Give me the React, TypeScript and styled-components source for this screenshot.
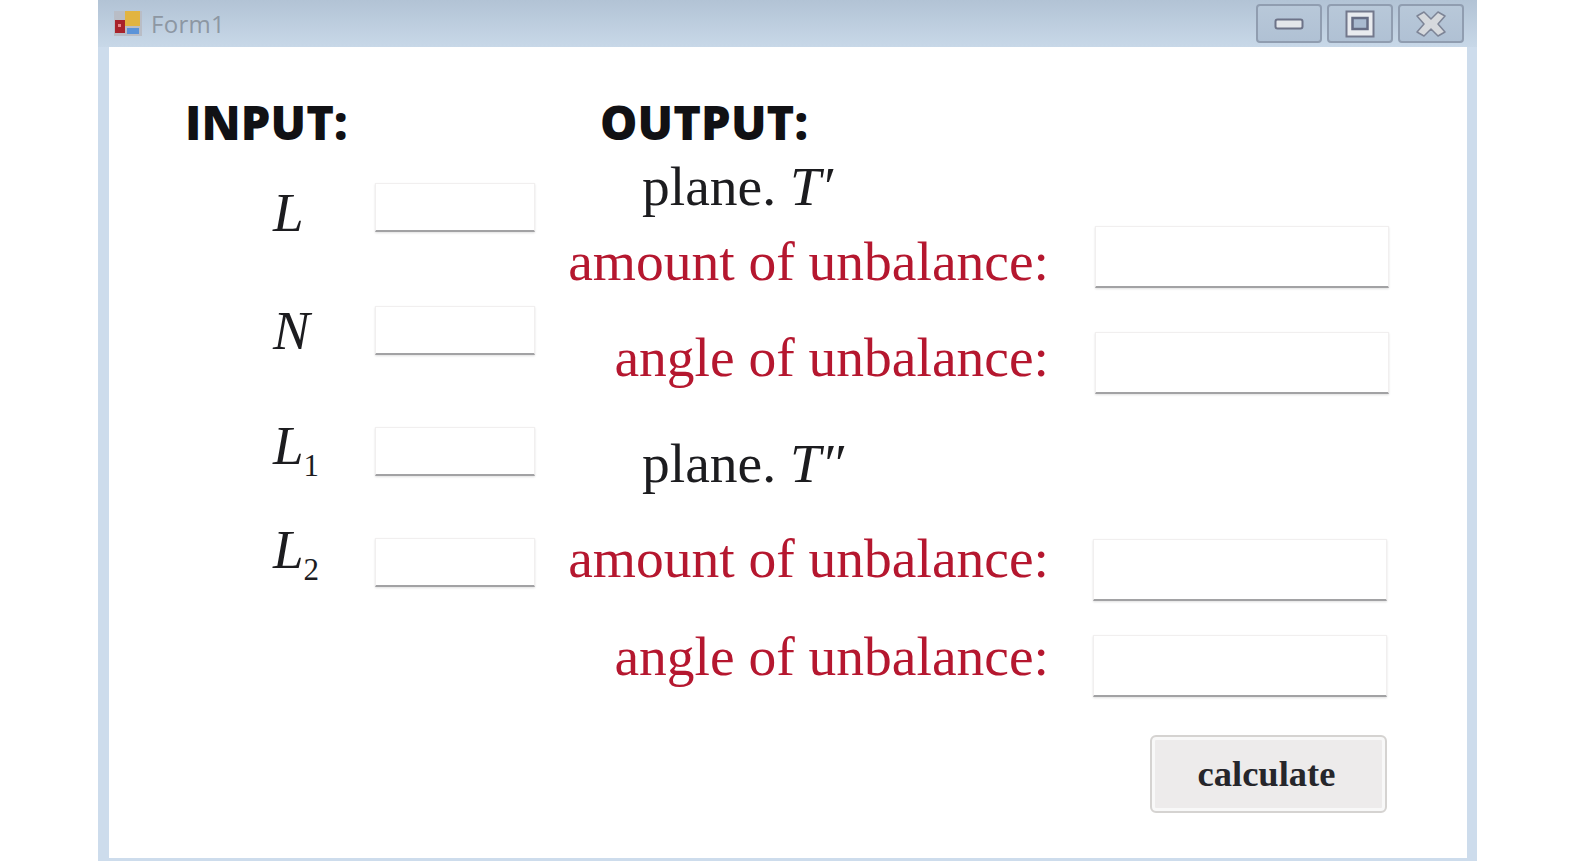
import React from 'react';
import styled, { createGlobalStyle } from 'styled-components';

const GlobalStyle = createGlobalStyle`
  html, body {
    margin: 0;
    padding: 0;
    height: 100%;
    background: #ffffff;
    overflow: hidden;
  }
  #root {
    height: 100%;
  }
`;

const App: React.FC = () => {
  return (
    <>
      <GlobalStyle />
      <Page>
        <FormWindow>
          <TitleBar>
            <TitleLeft>
              <FormIcon />
              <TitleText>Form1</TitleText>
            </TitleLeft>
            <WindowButtons>
              <WindowButton aria-label="minimize">
                <MinimizeGlyph />
              </WindowButton>
              <WindowButton aria-label="maximize">
                <MaximizeGlyph />
              </WindowButton>
              <WindowButton aria-label="close">
                <CloseGlyph />
              </WindowButton>
            </WindowButtons>
          </TitleBar>
          <Client>
            <InputColumn>
              <Heading>INPUT:</Heading>
              <InputRow $top={36}>
                <SymbolLabel $shift={11}>
                  <i>L</i>
                </SymbolLabel>
                <SmallField />
              </InputRow>
              <InputRow $top={74}>
                <SymbolLabel $shift={0}>
                  <i>N</i>
                </SymbolLabel>
                <SmallField />
              </InputRow>
              <InputRow $top={72}>
                <SymbolLabel $shift={-11}>
                  <i>L</i>
                  <sub>1</sub>
                </SymbolLabel>
                <SmallField />
              </InputRow>
              <InputRow $top={62}>
                <SymbolLabel $shift={-25}>
                  <i>L</i>
                  <sub>2</sub>
                </SymbolLabel>
                <SmallField />
              </InputRow>
            </InputColumn>
            <OutputColumn>
              <Heading $indent={40}>OUTPUT:</Heading>
              <PlaneTitle $top={10}>
                plane. <i>T′</i>
              </PlaneTitle>
              <OutputRow $top={9}>
                <OutputLabel $shift={10}>amount of unbalance:</OutputLabel>
                <WideField />
              </OutputRow>
              <OutputRow $top={44}>
                <OutputLabel $shift={-10}>angle of unbalance:</OutputLabel>
                <WideField />
              </OutputRow>
              <PlaneTitle $top={40}>
                plane. <i>T″</i>
              </PlaneTitle>
              <OutputRow $top={45}>
                <OutputLabel $shift={-22}>amount of unbalance:</OutputLabel>
                <WideField $nudge={-2} />
              </OutputRow>
              <OutputRow $top={34}>
                <OutputLabel $shift={-19}>angle of unbalance:</OutputLabel>
                <WideField $nudge={-2} />
              </OutputRow>
              <ButtonRow>
                <CalculateButton>calculate</CalculateButton>
              </ButtonRow>
            </OutputColumn>
          </Client>
        </FormWindow>
      </Page>
    </>
  );
};

const FormIcon = () => (
  <svg width="28" height="26" viewBox="0 0 28 26">
    <rect x="0" y="1" width="28" height="25" fill="#b9bdc6" />
    <rect x="1" y="10" width="10" height="13" fill="#a8232b" />
    <rect x="4" y="14" width="3" height="3" fill="#e8888a" />
    <rect x="11" y="1" width="15" height="15" fill="#e2b440" />
    <rect x="13" y="18" width="12" height="6" fill="#5b93d8" />
  </svg>
);

const MinimizeGlyph = () => (
  <svg width="30" height="12" viewBox="0 0 30 12">
    <rect x="1.5" y="1.5" width="27" height="9" rx="2" fill="#e3e6ea" stroke="#6d7388" strokeWidth="2" />
  </svg>
);

const MaximizeGlyph = () => (
  <svg width="30" height="28" viewBox="0 0 30 28">
    <rect x="1.5" y="1.5" width="27" height="25" fill="#e9ebef" stroke="#73788c" strokeWidth="2" />
    <rect x="7.5" y="8" width="15" height="11" fill="#a9bad0" stroke="#666c84" strokeWidth="2.5" />
  </svg>
);

const CloseGlyph = () => (
  <svg width="30" height="26" viewBox="0 0 30 26">
    <path
      d="M1 5 L8 1 L15 8 L22 1 L29 5 L22 13 L29 21 L22 25 L15 18 L8 25 L1 21 L8 13 Z"
      fill="#d6d9dd"
      stroke="#7d8496"
      strokeWidth="1.5"
      strokeLinejoin="round"
    />
  </svg>
);

const Page = styled.div`
  height: 100%;
  padding: 0 98px 0 98px;
  box-sizing: border-box;
`;

const FormWindow = styled.div`
  height: 861px;
  display: flex;
  flex-direction: column;
  background: #cddcec;
  box-sizing: border-box;
`;

const TitleBar = styled.div`
  height: 47px;
  flex: none;
  box-sizing: border-box;
  display: flex;
  align-items: flex-start;
  justify-content: space-between;
  padding: 4px 13px 0 16px;
  background: linear-gradient(#b2c3d5, #c8d8e8);
`;

const TitleLeft = styled.div`
  display: flex;
  align-items: center;
  gap: 9px;
  height: 38px;
`;

const TitleText = styled.span`
  font-family: 'Open Sans', sans-serif;
  font-size: 24px;
  letter-spacing: 0.3px;
  color: #8d97a3;
`;

const WindowButtons = styled.div`
  display: flex;
  gap: 5px;
`;

const WindowButton = styled.div`
  width: 66px;
  height: 39px;
  display: flex;
  align-items: center;
  justify-content: center;
  box-sizing: border-box;
  border: 2px solid #909db0;
  border-radius: 4px;
  background: linear-gradient(#b8c8d9, #b0c1d4);
`;

const Client = styled.div`
  flex: 1;
  display: flex;
  margin: 0 10px 3px 11px;
  padding-top: 50px;
  background: #ffffff;
`;

const InputColumn = styled.div`
  width: 451px;
  flex: none;
`;

const OutputColumn = styled.div`
  flex: 1;
`;

const Heading = styled.div<{ $indent?: number }>`
  height: 50px;
  line-height: 50px;
  padding-left: ${(p) => p.$indent ?? 76}px;
  font-family: 'Open Sans', sans-serif;
  font-size: 47px;
  font-weight: 800;
  letter-spacing: 0.1px;
  color: #111114;
`;

const InputRow = styled.div<{ $top: number }>`
  display: flex;
  align-items: center;
  height: 49px;
  margin-top: ${(p) => p.$top}px;
  padding-left: 164px;
`;

const SymbolLabel = styled.div<{ $shift: number }>`
  width: 102px;
  flex: none;
  margin-top: ${(p) => p.$shift}px;
  font-family: 'Liberation Serif', serif;
  font-size: 55px;
  line-height: 60px;
  color: #1c1c1f;

  sub {
    font-size: 31px;
    line-height: 0;
  }
`;

const SmallField = styled.div`
  width: 160px;
  height: 49px;
  box-sizing: border-box;
  background: #ffffff;
  border: 1px solid #f1efef;
  border-bottom: 2px solid #a2a2a4;
  box-shadow: 0 1px 2px rgba(0, 0, 0, 0.12);
`;

const PlaneTitle = styled.div<{ $top: number }>`
  margin-top: ${(p) => p.$top}px;
  padding-left: 82px;
  height: 60px;
  line-height: 60px;
  font-family: 'Liberation Serif', serif;
  font-size: 55.5px;
  color: #1c1c1f;
`;

const OutputRow = styled.div<{ $top: number }>`
  display: flex;
  align-items: center;
  height: 62px;
  margin-top: ${(p) => p.$top}px;
`;

const OutputLabel = styled.div<{ $shift: number }>`
  width: 489px;
  flex: none;
  margin-top: ${(p) => p.$shift}px;
  text-align: right;
  line-height: 60px;
  font-family: 'Liberation Serif', serif;
  font-size: 55.5px;
  color: #b5172f;
  white-space: nowrap;
`;

const WideField = styled.div<{ $nudge?: number }>`
  width: 294px;
  height: 62px;
  margin-left: ${(p) => 46 + (p.$nudge ?? 0)}px;
  box-sizing: border-box;
  background: #ffffff;
  border: 1px solid #f1efef;
  border-bottom: 2px solid #a2a2a4;
  box-shadow: 0 1px 2px rgba(0, 0, 0, 0.12);
`;

const ButtonRow = styled.div`
  display: flex;
  margin-top: 38px;
  padding-left: 590px;
`;

const CalculateButton = styled.button`
  width: 237px;
  height: 78px;
  padding: 0 4px 2px 0;
  box-sizing: border-box;
  background: #edebeb;
  border: 2px solid #d5d3d1;
  border-radius: 6px;
  box-shadow: inset 0 0 0 3px #f8f8f8;
  font-family: 'Liberation Serif', serif;
  font-size: 36.5px;
  font-weight: 700;
  color: #26262b;
`;

export default App;
